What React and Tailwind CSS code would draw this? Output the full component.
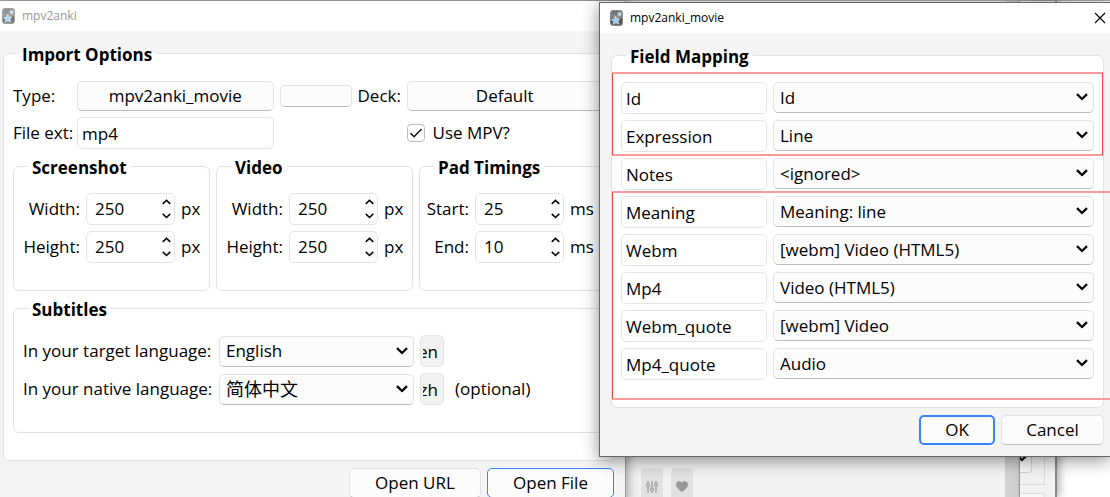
import React from "react";

const selectBox =
  "block h-[31px] w-full appearance-none rounded-[5px] border border-[#e2e2e2] border-b-[#bcbcbc] bg-[#fcfcfc] pl-[6px] pr-8 leading-6 text-black outline-none";
const textBox =
  "h-8 w-full min-w-0 rounded-[5px] border border-[#e4e4e4] bg-white px-1 leading-6 text-black outline-none";
const codeBox =
  "h-8 w-6 rounded-[5px] border border-[#e4e4e4] bg-[#f2f2f2] pl-[2px] pr-[5px] outline-none [direction:rtl]";
const pushButton =
  "h-[30px] rounded-[5px] border border-[#e2e2e2] border-b-[#bcbcbc] bg-[#fcfcfc] leading-6";

function AppIcon({ faded }) {
  return (
    <svg viewBox="0 0 13 16" className={faded ? "h-4 w-[13px] opacity-80" : "h-4 w-[13px]"} aria-hidden="true">
      <defs>
        <linearGradient id="tile" x1="0" y1="0" x2="0" y2="1">
          <stop offset="0" stopColor="#6d6d6d" />
          <stop offset="0.5" stopColor="#8c8c8c" />
          <stop offset="0.55" stopColor="#4c4c4c" />
          <stop offset="1" stopColor="#606060" />
        </linearGradient>
      </defs>
      <rect x="0.5" y="0.5" width="12" height="15" rx="2.5" fill="url(#tile)" stroke="#8a8a8a" />
      <path d="M5.6 6.2 7 8.7l2.8.2-1.9 2.1.8 2.9-2.8-1.1-2.5 1.5.2-2.9-2.2-1.8 2.8-.7z" fill="#8fd0f7" stroke="#e6f5ff" strokeWidth="0.6" />
      <path d="m9.4 1.8.8 1.3 1.5.1-1 1.1.4 1.5-1.4-.6-1.3.8.1-1.5-1.1-1 1.5-.3z" fill="#a9dcfa" stroke="#e6f5ff" strokeWidth="0.4" />
    </svg>
  );
}

function Chevron({ up, small }) {
  return (
    <svg
      viewBox="0 0 12 8"
      className={small ? "h-[6px] w-[9px]" : "h-2 w-3"}
      fill="none"
      stroke="#000"
      strokeWidth={small ? 2 : 2.3}
      aria-hidden="true"
    >
      <path d={up ? "M1 6.5 6 1.8l5 4.7" : "M1 1.2 6 6l5-4.8"} />
    </svg>
  );
}

function Select({ label, id, value, options, className }) {
  return (
    <div className="relative">
      <select id={id} aria-label={label} defaultValue={value} className={selectBox + " " + (className || "")}>
        {(options || [value]).map((o) => (
          <option key={o}>{o}</option>
        ))}
      </select>
      <span className="pointer-events-none absolute right-[6px] top-[11px]">
        <Chevron />
      </span>
    </div>
  );
}

function Group({ title, className, legendClass, children }) {
  return (
    <fieldset className={"min-w-0 rounded-md border border-[#e2e2e2] bg-white " + (className || "")}>
      <legend className={"px-1 pt-1 font-bold leading-6 " + (legendClass || "ml-[14px]")}>{title}</legend>
      {children}
    </fieldset>
  );
}

function SpinRow({ id, label, value, unit }) {
  return (
    <>
      <label htmlFor={id} className="text-right">{label}</label>
      <div className="flex h-8 w-[89px] rounded-[5px] border border-[#e4e4e4] bg-white">
        <input
          id={id}
          type="text"
          inputMode="numeric"
          defaultValue={value}
          className="w-full min-w-0 bg-transparent pl-2 outline-none"
        />
        <div className="flex w-4 shrink-0 flex-col items-center justify-center gap-2">
          <button type="button" aria-label={"Increase " + label}><Chevron up small /></button>
          <button type="button" aria-label={"Decrease " + label}><Chevron small /></button>
        </div>
      </div>
      <span>{unit}</span>
    </>
  );
}

function SpinGroup({ title, unit, rows, columns }) {
  return (
    <Group title={title} className="pb-[27px]">
      <div className={"grid items-center gap-[6px] pt-[13px] leading-6 " + columns}>
        {rows.map(([label, value]) => (
          <SpinRow key={label} id={title + label} label={label} value={value} unit={unit} />
        ))}
      </div>
    </Group>
  );
}

function ImportWindow() {
  return (
    <section className="absolute left-0 top-px w-[626px] border-r border-[#999] bg-[#f4f4f4] shadow-[2px_0_10px_rgba(0,0,0,0.35)]">
      <header className="flex h-[30px] items-center gap-[7px] bg-white pl-[2px] text-[12px] text-[#999]">
        <AppIcon faded />
        <h1>mpv2anki</h1>
      </header>
      <form className="pb-1 pl-[3px] pr-[11px] pt-2" onSubmit={(e) => e.preventDefault()}>
        <Group title="Import Options" className="pb-[27px] pl-[9px] pr-[10px]" legendClass="ml-[5px]">
          <div className="grid grid-cols-[58px_1fr_72px_43px_1fr] items-center gap-[6px] pt-[14px] leading-6">
            <label htmlFor="type">Type:</label>
            <button id="type" type="button" className={pushButton}>mpv2anki_movie</button>
            <button type="button" aria-label="Manage" className="h-[22px] rounded-[5px] border border-[#e2e2e2] border-b-[#bcbcbc] bg-[#fcfcfc]" />
            <label htmlFor="deck">Deck:</label>
            <button id="deck" type="button" className={pushButton}>Default</button>
            <label htmlFor="ext" className="whitespace-nowrap">File ext:</label>
            <input id="ext" defaultValue="mp4" className={textBox} />
            <label className="col-start-5 flex items-center gap-2">
              <span className="relative flex">
                <input type="checkbox" defaultChecked className="peer size-[18px] appearance-none rounded border border-[#bdbdbd] bg-white" />
                <svg viewBox="0 0 18 18" className="pointer-events-none absolute inset-0 hidden size-[18px] peer-checked:block" fill="none" stroke="#111" strokeWidth="1.5" aria-hidden="true">
                  <path d="m3.5 9.2 3.6 3.5 7.4-7.6" />
                </svg>
              </span>
              Use MPV?
            </label>
          </div>
          <div className="grid grid-cols-[197px_197px_1fr] gap-[6px] pt-[3px]">
            <SpinGroup title="Screenshot" unit="px" columns="grid-cols-[58px_89px_1fr] pl-2" rows={[["Width:", 250], ["Height:", 250]]} />
            <SpinGroup title="Video" unit="px" columns="grid-cols-[58px_89px_1fr] pl-2" rows={[["Width:", 250], ["Height:", 250]]} />
            <SpinGroup title="Pad Timings" unit="ms" columns="grid-cols-[43px_89px_1fr] pl-[6px]" rows={[["Start:", 25], ["End:", 10]]} />
          </div>
          <Group title="Subtitles" className="mt-[3px] pb-[27px]">
            <div className="grid grid-cols-[190px_195px_24px_1fr] items-center gap-[6px] pl-[9px] pt-[13px] leading-6">
              <label htmlFor="target" className="whitespace-nowrap">In your target language:</label>
              <Select id="target" value="English" options={["English", "简体中文"]} />
              <input aria-label="Target language code" readOnly value="en" className={codeBox} />
              <span />
              <label htmlFor="native" className="whitespace-nowrap">In your native language:</label>
              <Select id="native" value="简体中文" options={["English", "简体中文"]} className="text-[18px]" />
              <input aria-label="Native language code" readOnly value="zh" className={codeBox} />
              <span className="pl-[5px]">(optional)</span>
            </div>
          </Group>
        </Group>
        <div className="flex justify-end gap-[6px] pt-[7px]">
          <button type="button" className={pushButton + " w-[132px]"}>Open URL</button>
          <button type="submit" className="h-[30px] w-[127px] rounded-[5px] border border-[#3b82f6] bg-[#fcfcfc] leading-6">Open File</button>
        </div>
      </form>
    </section>
  );
}

const mapping = [
  ["Id", "Id"],
  ["Expression", "Line"],
  ["Notes", "<ignored>"],
  ["Meaning", "Meaning: line"],
  ["Webm", "[webm] Video (HTML5)"],
  ["Mp4", "Video (HTML5)"],
  ["Webm_quote", "[webm] Video"],
  ["Mp4_quote", "Audio"],
];

function MappingDialog() {
  return (
    <section
      role="dialog"
      aria-label="mpv2anki_movie"
      className="absolute left-[599px] right-0 top-[2px] border-y border-l border-[#666] bg-[#f4f4f4] shadow-[0_3px_16px_rgba(0,0,0,0.45)]"
    >
      <header className="flex h-[30px] items-center gap-[7px] bg-white pl-[10px] pr-1 text-[12px]">
        <AppIcon />
        <h2 className="grow">mpv2anki_movie</h2>
        <button type="button" aria-label="Close">
          <svg viewBox="0 0 12 12" className="size-3" stroke="#000" strokeWidth="1.1" aria-hidden="true">
            <path d="m1 1 10 10M11 1 1 11" />
          </svg>
        </button>
      </header>
      <form className="pb-[11px] pl-[11px] pr-[6px] pt-2" onSubmit={(e) => e.preventDefault()}>
        <Group title="Field Mapping" className="px-[9px] pb-[27px]" legendClass="ml-[5px]">
          <div className="grid grid-cols-[146px_1fr] gap-[6px] pt-[13px]">
            {mapping.map(([field, value]) => (
              <React.Fragment key={field}>
                <input aria-label="Field name" defaultValue={field} className={textBox} />
                <Select label={field} value={value} />
              </React.Fragment>
            ))}
          </div>
        </Group>
        <div className="flex justify-end gap-[6px] pt-[7px]">
          <button type="submit" className="h-[30px] w-[76px] rounded-[5px] border-2 border-[#3b82f6] bg-[#fcfcfc] leading-6">OK</button>
          <button type="button" className={pushButton + " w-[103px]"}>Cancel</button>
        </div>
      </form>
      <div className="pointer-events-none absolute left-3 right-[7px] top-[69px] h-[84px] rounded-[1px] border-x border-y-2 border-x-[#f43f3f] border-y-[#fb9a9a]" />
      <div className="pointer-events-none absolute left-3 right-0 top-[188px] h-[209px] rounded-l-[1px] border-y-2 border-l border-l-[#f43f3f] border-y-[#fb9a9a]" />
    </section>
  );
}

function Backdrop() {
  return (
    <div className="flex h-full border-t border-[#aaa] bg-white">
      <div className="flex grow items-end gap-2 bg-[#f2f2f2] pl-[641px]">
        <button type="button" aria-label="Settings" className="flex h-[29px] w-[22px] items-center justify-center rounded-t bg-[#e1e1e1] pt-2">
          <svg viewBox="0 0 12 12" className="size-3" fill="none" stroke="#9a9a9a" strokeWidth="1.2" aria-hidden="true">
            <path d="M2 0v3M2 6v6M6 0v7M6 10v2M10 0v2M10 5v7" />
            <circle cx="2" cy="4.5" r="1.5" />
            <circle cx="6" cy="8.5" r="1.5" />
            <circle cx="10" cy="3.5" r="1.5" />
          </svg>
        </button>
        <button type="button" aria-label="Favourite" className="flex h-[29px] w-[22px] items-center justify-center rounded-t bg-[#e1e1e1] pt-2">
          <svg viewBox="0 0 12 11" className="h-[11px] w-3" fill="#979797" aria-hidden="true">
            <path d="M6 11C3 8.900 0 6.500 0 3.600 0 .2 4-.9 6 1.700 8-.9 12 .2 12 3.600 12 6.500 9 8.900 6 11Z" />
          </svg>
        </button>
      </div>
      <div className="w-[14px] bg-[#d2d2d2]" />
      <div className="flex w-[38px] flex-col justify-end border-l border-r-2 border-l-[#999] border-r-[#888] bg-[#f2f2f2] pr-[10px] shadow-[3px_0_8px_rgba(0,0,0,0.3)]">
        <div className="h-[60px] border-b border-r border-[#d8d8d8] pr-3">
          <div className="h-12 overflow-hidden rounded-br border-b border-r border-[#d0d0d0] bg-[#f8f8f8] pt-[29px]">
            <div className="-ml-1">
              <Chevron />
            </div>
          </div>
        </div>
        <div className="mt-2 h-1 rounded-tr border-r border-t border-[#ddd] bg-[#f8f8f8]" />
      </div>
      <div className="w-[53px]" />
    </div>
  );
}

export default function App() {
  return (
    <main className="relative h-screen overflow-hidden text-[17px] text-black [font-family:'Open_Sans','Noto_Sans_CJK_SC',sans-serif]">
      <Backdrop />
      <ImportWindow />
      <MappingDialog />
    </main>
  );
}
